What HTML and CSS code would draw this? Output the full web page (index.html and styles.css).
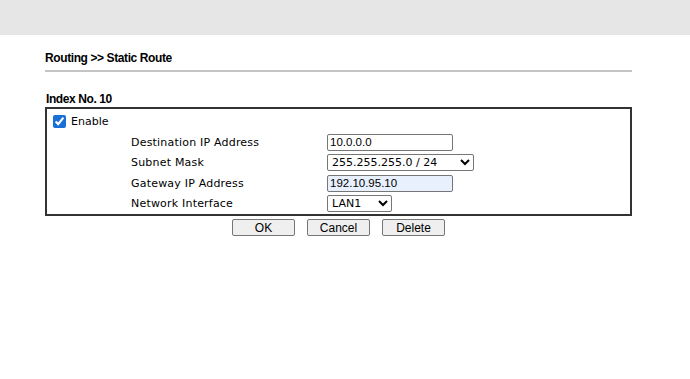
FILE: index.html
```html
<!DOCTYPE html>
<html lang="en">
<head>
    <meta charset="UTF-8">
    <title>Static Route</title>
    <link rel="stylesheet" href="styles.css">
</head>
<body>
    <div class="topbar"></div>
    <div class="page">
        <div class="title">Routing &gt;&gt; Static Route</div>
        <div class="rule"></div>

        <form>
            <div class="index">Index No. 10</div>
            <div class="box">
                <label class="enable">
                    <input type="checkbox" checked> Enable
                </label>
                <div class="fields">
                    <span class="lbl">Destination IP Address</span>
                    <div><input type="text" class="ip" value="10.0.0.0"></div>

                    <span class="lbl">Subnet Mask</span>
                    <div>
                        <select class="mask">
                            <option>255.255.255.0 / 24</option>
                        </select>
                    </div>

                    <span class="lbl">Gateway IP Address</span>
                    <div><input type="text" class="ip filled" value="192.10.95.10"></div>

                    <span class="lbl">Network Interface</span>
                    <div>
                        <select class="iface">
                            <option>LAN1</option>
                        </select>
                    </div>
                </div>
            </div>
            <div class="buttons">
                <button type="button">OK</button>
                <button type="button">Cancel</button>
                <button type="button">Delete</button>
            </div>
        </form>
    </div>
</body>
</html>
```

FILE: styles.css
```css
body {
    margin: 0;
    background: #fff;
    font-family: "DejaVu Sans", Verdana, sans-serif;
    color: #000;
}

.topbar {
    height: 35px;
    background-color: #e6e6e6;
}

.page {
    margin-left: 45px;
    width: 587px;
}

.title {
    margin-top: 15px;
    line-height: 16px;
    font-family: "Liberation Sans", Arial, sans-serif;
    font-weight: bold;
    font-size: 12px;
    letter-spacing: -0.4px;
}

.rule {
    margin-top: 4px;
    height: 2px;
    background-color: #c4c4c4;
}

.index {
    margin-top: 19px;
    padding-left: 1px;
    line-height: 16px;
    font-family: "Liberation Sans", Arial, sans-serif;
    font-weight: bold;
    font-size: 12px;
    letter-spacing: -0.4px;
}

.box {
    border: 2px solid #333;
    height: 105px;
}

.enable {
    display: flex;
    align-items: center;
    height: 21px;
    padding-left: 6px;
    padding-top: 2px;
    font-size: 11px;
}

.enable input {
    margin: 0 5px 0 0;
    width: 13px;
    height: 13px;
    accent-color: #1a6fd6;
}

.fields {
    display: grid;
    grid-template-columns: 196px auto;
    grid-auto-rows: 20.5px;
    align-items: center;
    padding-left: 84px;
    font-size: 11px;
}

.lbl {
    letter-spacing: 0.2px;
}

input[type=text] {
    box-sizing: border-box;
    width: 126px;
    height: 17px;
    padding: 0 2px;
    border: 1px solid #767676;
    border-radius: 2px;
    font-family: "Liberation Sans", Arial, sans-serif;
    font-size: 11.5px;
    display: block;
}

input.filled {
    background-color: #e8f0fe;
}

select {
    display: block;
    box-sizing: border-box;
    height: 17px;
    padding: 0;
    border: 1px solid #767676;
    border-radius: 2px;
    background-color: #fff;
    font-family: "DejaVu Sans", Verdana, sans-serif;
    font-size: 11px;
}

.mask {
    width: 147px;
}

.iface {
    width: 65px;
}

.buttons {
    display: flex;
    justify-content: center;
    gap: 12px;
    margin-top: 3px;
}

.buttons button {
    box-sizing: border-box;
    width: 63px;
    height: 17px;
    padding: 0;
    border: 1px solid #767676;
    border-radius: 2px;
    background-color: #efefef;
    font-family: "Liberation Sans", Arial, sans-serif;
    font-size: 12px;
    color: #000;
}
```
